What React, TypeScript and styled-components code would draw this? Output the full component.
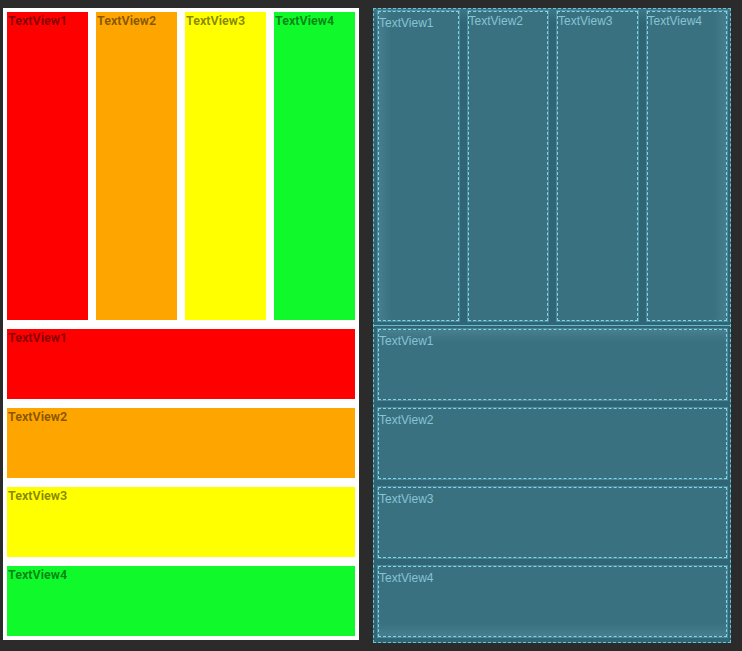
import styled, { createGlobalStyle } from "styled-components";

const GlobalStyle = createGlobalStyle`
  html, body {
    margin: 0;
    padding: 0;
    background: #2b2b2c;
  }
  *, *::before, *::after {
    box-sizing: border-box;
  }
`;

const Stage = styled.div`
  display: flex;
  align-items: flex-start;
  gap: 14px;
  padding: 8px 0 0 3px;
`;

/* ---------- design view (left) ---------- */

const Design = styled.div`
  width: 356px;
  height: 632px;
  padding: 4px;
  background: #ffffff;
  display: flex;
  flex-direction: column;
  gap: 9px;
`;

const Columns = styled.div`
  display: flex;
  gap: 8px;
  height: 308px;
  flex: none;
`;

const View = styled.div<{ $bg: string }>`
  flex: 1;
  background: ${(p) => p.$bg};
  color: rgba(0, 0, 0, 0.48);
  font-family: Roboto, "Liberation Sans", sans-serif;
  font-weight: 700;
  font-size: 12.5px;
  line-height: 15px;
  padding-left: 1px;
  padding-top: 1px;
`;

const Row = styled(View)`
  flex: none;
  height: 70px;
`;

/* ---------- blueprint view (right) ---------- */

const Blueprint = styled.div`
  width: 358px;
  height: 635px;
  background: #2f6575;
  border: 1px dashed #6cc3d6;
  display: flex;
  flex-direction: column;
`;

const BlueTop = styled.div`
  display: flex;
  gap: 9px;
  padding: 2px 3px 4px 4px;
  height: 317px;
  border-bottom: 1px solid #6cb9cc;
  flex: none;
  background: linear-gradient(#3f7686, #2f6575 14px);
`;

const BlueRows = styled.div`
  display: flex;
  flex-direction: column;
  gap: 8px;
  padding: 3px 3px 2px 4px;
  flex: 1;
`;

const Box = styled.div<{ $shade?: "top" | "bottom" | "left" | "right" }>`
  flex: 1;
  background: #3a7181;
  border: 1px dashed #84d6e6;
  outline: 1px solid rgba(120, 205, 225, 0.35);
  color: #86c3d3;
  font-family: "Liberation Sans", Arial, sans-serif;
  font-size: 12px;
  line-height: 14px;
  padding-top: ${(p) => (p.$shade === "left" ? 4 : 2)}px;
  box-shadow: ${(p) =>
    p.$shade === "top"
      ? "inset 0 12px 10px -6px rgba(140, 200, 215, 0.18)"
      : p.$shade === "bottom"
      ? "inset 0 -12px 10px -6px rgba(140, 200, 215, 0.18)"
      : p.$shade === "left"
      ? "inset 12px 0 10px -6px rgba(140, 200, 215, 0.16)"
      : p.$shade === "right"
      ? "inset -12px 0 10px -6px rgba(140, 200, 215, 0.16)"
      : "none"};
`;

const BlueRow = styled(Box)`
  flex: none;
  height: 71px;
  padding-top: 4px;
`;

const colors = ["#ff0000", "#ffa500", "#ffff00", "#10f92b"];
const labels = ["TextView1", "TextView2", "TextView3", "TextView4"];
const colShade = ["left", undefined, undefined, "right"] as const;
const rowShade = ["top", undefined, undefined, "bottom"] as const;

export default function App() {
  return (
    <>
      <GlobalStyle />
      <Stage>
        <Design>
          <Columns>
            {labels.map((l, i) => (
              <View key={l} $bg={colors[i]}>
                {l}
              </View>
            ))}
          </Columns>
          {labels.map((l, i) => (
            <Row key={l} $bg={colors[i]}>
              {l}
            </Row>
          ))}
        </Design>
        <Blueprint>
          <BlueTop>
            {labels.map((l, i) => (
              <Box key={l} $shade={colShade[i]}>
                {l}
              </Box>
            ))}
          </BlueTop>
          <BlueRows>
            {labels.map((l, i) => (
              <BlueRow key={l} $shade={rowShade[i]}>
                {l}
              </BlueRow>
            ))}
          </BlueRows>
        </Blueprint>
      </Stage>
    </>
  );
}
